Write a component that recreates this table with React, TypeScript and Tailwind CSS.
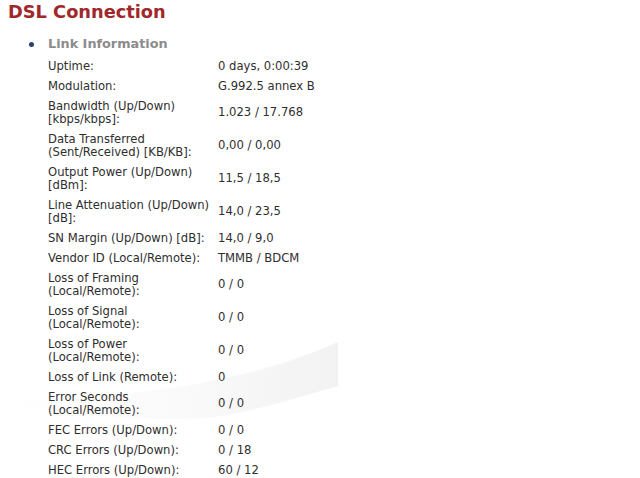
import React from "react";

type Row = { label: React.ReactNode; value: string; two?: boolean };

const rows: Row[] = [
  { label: "Uptime:", value: "0 days, 0:00:39" },
  { label: "Modulation:", value: "G.992.5 annex B" },
  { label: <>Bandwidth (Up/Down)<br />[kbps/kbps]:</>, value: "1.023 / 17.768", two: true },
  { label: <>Data Transferred<br />(Sent/Received) [KB/KB]:</>, value: "0,00 / 0,00", two: true },
  { label: <>Output Power (Up/Down)<br />[dBm]:</>, value: "11,5 / 18,5", two: true },
  { label: <>Line Attenuation (Up/Down)<br />[dB]:</>, value: "14,0 / 23,5", two: true },
  { label: "SN Margin (Up/Down) [dB]:", value: "14,0 / 9,0" },
  { label: "Vendor ID (Local/Remote):", value: "TMMB / BDCM" },
  { label: <>Loss of Framing<br />(Local/Remote):</>, value: "0 / 0", two: true },
  { label: <>Loss of Signal<br />(Local/Remote):</>, value: "0 / 0", two: true },
  { label: <>Loss of Power<br />(Local/Remote):</>, value: "0 / 0", two: true },
  { label: "Loss of Link (Remote):", value: "0" },
  { label: <>Error Seconds<br />(Local/Remote):</>, value: "0 / 0", two: true },
  { label: "FEC Errors (Up/Down):", value: "0 / 0" },
  { label: "CRC Errors (Up/Down):", value: "0 / 18" },
  { label: "HEC Errors (Up/Down):", value: "60 / 12" },
];

export default function App() {
  return (
    <div className="relative w-[640px] h-[478px] overflow-hidden bg-white" style={{ fontFamily: '"DejaVu Sans", Verdana, sans-serif' }}>
      <svg className="absolute left-0 top-0" width="640" height="478" viewBox="0 0 640 478">
        <defs>
          <linearGradient id="sw" x1="0" y1="0" x2="1" y2="0">
            <stop offset="0" stopColor="#ffffff" />
            <stop offset="0.6" stopColor="#f9f9f9" />
            <stop offset="1" stopColor="#f2f2f2" />
          </linearGradient>
        </defs>
        <path d="M0 398 C 120 402 250 382 338 342 L 338 386 C 290 400 250 412 215 417 C 140 424 60 412 0 402 Z" fill="url(#sw)" />
      </svg>
      <div className="relative">
        <h1 className="pl-[8px] pt-[1px] text-[17.8px] leading-[22px] font-bold text-[#a0282a]">DSL Connection</h1>
        <div className="mt-[13px] flex items-center">
          <span className="ml-[29px] w-[5px] h-[5px] rounded-full bg-[#2c3e6e]" />
          <span className="ml-[14px] text-[12.8px] leading-[16px] font-bold text-[#8c8c8c]">Link Information</span>
        </div>
        <div className="mt-[4px] ml-[48px] text-[11.6px] text-[#2e2e2e]">
          {rows.map((r, i) => (
            <div key={i} className="flex items-center py-[3.5px]">
              <div className="w-[170px] leading-[13px] whitespace-nowrap">{r.label}</div>
              <div className="leading-[13px] whitespace-nowrap">{r.value}</div>
            </div>
          ))}
        </div>
      </div>
    </div>
  );
}
